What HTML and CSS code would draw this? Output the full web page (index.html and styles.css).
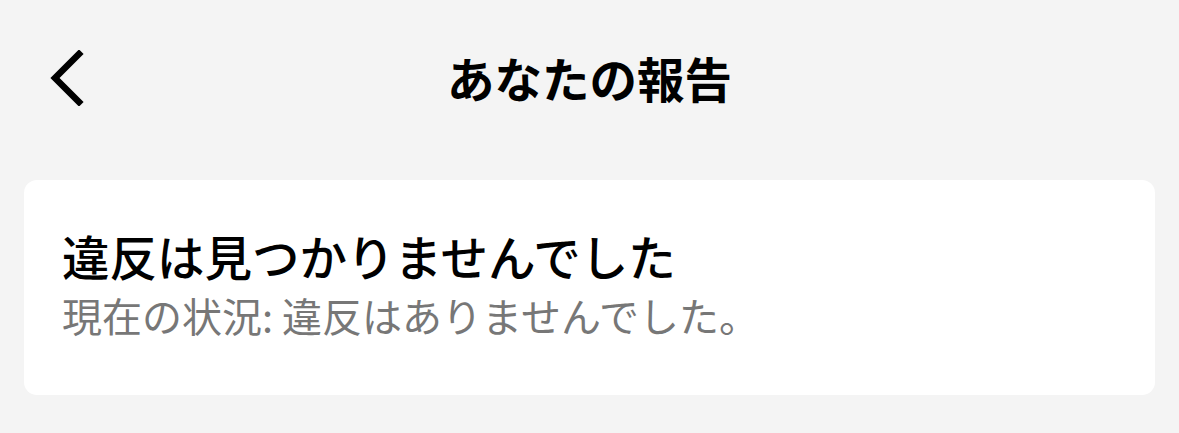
FILE: index.html
```html
<!DOCTYPE html>
<html lang="ja">
<head>
<meta charset="utf-8">
<link rel="stylesheet" href="styles.css">
</head>
<body>
<div class="page">
  <header class="topbar">
    <button class="back" aria-label="戻る">
      <svg width="40" height="56" viewBox="0 0 40 56"><path d="M33 4 L9 28 L33 52" fill="none" stroke="#000" stroke-width="6.5" stroke-linecap="square"/></svg>
    </button>
    <h1 class="title">あなたの報告</h1>
  </header>
  <section class="card">
    <h2 class="card-title">違反は見つかりませんでした</h2>
    <p class="card-sub">現在の状況: 違反はありませんでした。</p>
  </section>
</div>
</body>
</html>
```
FILE: styles.css
```css
html, body { margin: 0; padding: 0; }
body {
  background: #f4f4f4;
  font-family: "Noto Sans CJK JP", "Noto Sans", sans-serif;
  color: #000;
  width: 1179px;
  height: 433px;
  overflow: hidden;
}
.page { padding: 0 24px; }
.topbar {
  position: relative;
  height: 158px;
  display: flex;
  align-items: center;
  justify-content: center;
}
.back {
  position: absolute;
  left: 22px;
  top: 50px;
  background: none;
  border: 0;
  padding: 0;
  width: 40px;
  height: 56px;
}
.back svg { display: block; }
.title {
  margin: 0 0 2px 0;
  font-size: 47.5px;
  font-weight: 700;
  line-height: 1;
  letter-spacing: 0;
}
.card {
  margin-top: 22px;
  background: #fff;
  border-radius: 13px;
  height: 215px;
  box-sizing: border-box;
  padding: 44px 38px 0;
}
.card-title {
  margin: 0;
  font-size: 47.5px;
  font-weight: 500;
  line-height: 64px;
}
.card-sub {
  margin: 0;
  font-size: 40px;
  font-weight: 400;
  color: #777;
  line-height: 54px;
}
```
